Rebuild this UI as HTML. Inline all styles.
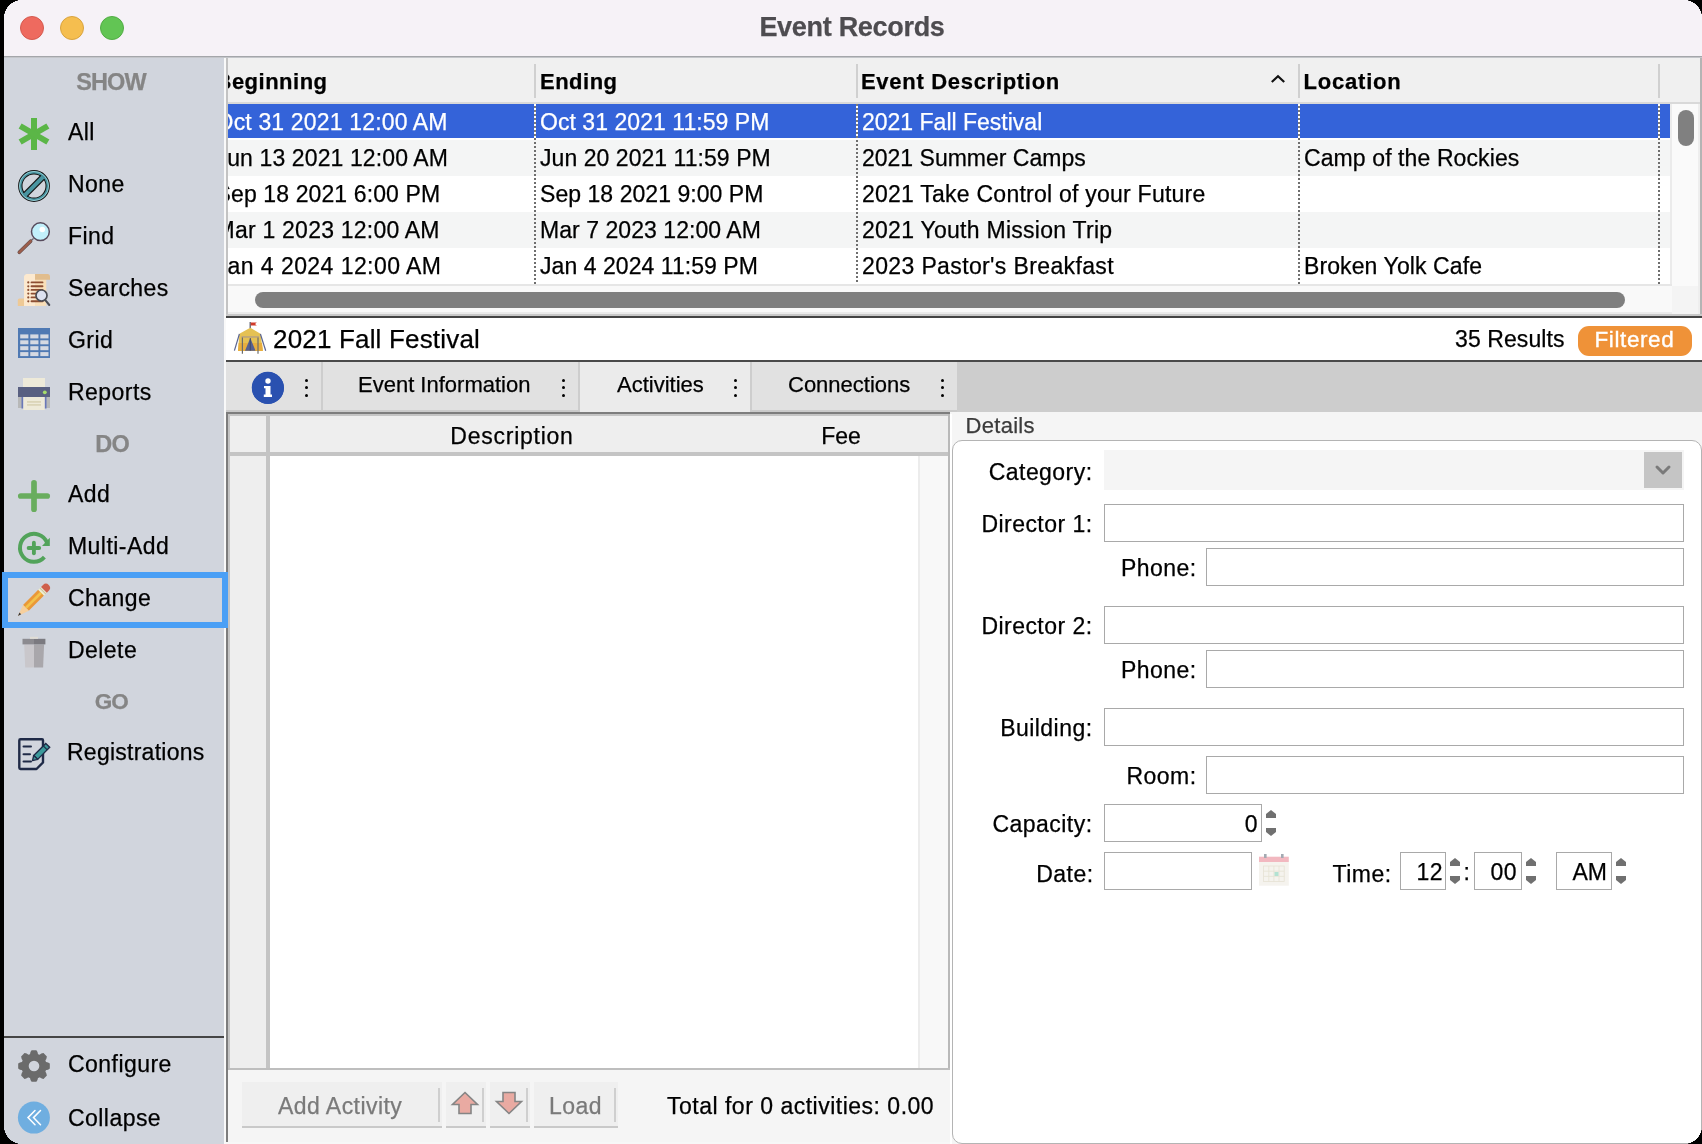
<!DOCTYPE html>
<html><head><meta charset="utf-8"><style>
html,body{margin:0;padding:0;width:1702px;height:1144px;overflow:hidden;background:#000;font-family:"Liberation Sans", sans-serif}
div{-webkit-text-stroke:0.25px}
</style></head><body>
<div style="position:absolute;left:0;top:0;width:1702px;height:1144px;will-change:transform"><div style="position:absolute;left:4px;top:0px;width:1698px;height:56px;background:#f6f2f7"></div><div style="position:absolute;left:4px;top:56px;width:1698px;height:1px;background:#a4a6aa"></div><div style="position:absolute;left:4px;top:57px;width:1698px;height:1px;background:#c4c6ca"></div><div style="position:absolute;top:14.14px;font-size:27px;line-height:27px;font-weight:bold;color:#4e4c50;white-space:nowrap;letter-spacing:-0.3px;left:552.0px;width:600px;text-align:center;">Event Records</div><div style="position:absolute;left:20px;top:16px;width:24px;height:24px;background:#ee6a5f;border-radius:50%;box-sizing:border-box;border:1px solid #d55a4f"></div><div style="position:absolute;left:60px;top:16px;width:24px;height:24px;background:#f5be4f;border-radius:50%;box-sizing:border-box;border:1px solid #d9a43f"></div><div style="position:absolute;left:100px;top:16px;width:24px;height:24px;background:#62c554;border-radius:50%;box-sizing:border-box;border:1px solid #52ad45"></div><div style="position:absolute;left:4px;top:58px;width:220px;height:1086px;background:#d1d5dd"></div><div style="position:absolute;left:224px;top:58px;width:2px;height:1086px;background:#f9f9f9"></div><div style="position:absolute;top:70.81px;font-size:23.5px;line-height:23.5px;font-weight:bold;color:#858585;white-space:nowrap;letter-spacing:-0.95px;left:11.0px;width:200px;text-align:center;">SHOW</div><div style="position:absolute;top:432.81px;font-size:23.5px;line-height:23.5px;font-weight:bold;color:#858585;white-space:nowrap;letter-spacing:-0.6px;left:12.200000000000003px;width:200px;text-align:center;">DO</div><div style="position:absolute;top:691.45px;font-size:22.5px;line-height:22.5px;font-weight:bold;color:#858585;white-space:nowrap;letter-spacing:-1.0px;left:11.200000000000003px;width:200px;text-align:center;">GO</div><div style="position:absolute;top:120.53px;font-size:23px;line-height:23px;font-weight:normal;color:#000;white-space:nowrap;letter-spacing:0.45px;left:68px;">All</div><div style="position:absolute;top:172.53px;font-size:23px;line-height:23px;font-weight:normal;color:#000;white-space:nowrap;letter-spacing:0.45px;left:68px;">None</div><div style="position:absolute;top:224.53px;font-size:23px;line-height:23px;font-weight:normal;color:#000;white-space:nowrap;letter-spacing:0.45px;left:68px;">Find</div><div style="position:absolute;top:276.53px;font-size:23px;line-height:23px;font-weight:normal;color:#000;white-space:nowrap;letter-spacing:0.45px;left:68px;">Searches</div><div style="position:absolute;top:328.53px;font-size:23px;line-height:23px;font-weight:normal;color:#000;white-space:nowrap;letter-spacing:0.45px;left:68px;">Grid</div><div style="position:absolute;top:380.53px;font-size:23px;line-height:23px;font-weight:normal;color:#000;white-space:nowrap;letter-spacing:0.45px;left:68px;">Reports</div><div style="position:absolute;top:482.53px;font-size:23px;line-height:23px;font-weight:normal;color:#000;white-space:nowrap;letter-spacing:0.45px;left:68px;">Add</div><div style="position:absolute;top:534.53px;font-size:23px;line-height:23px;font-weight:normal;color:#000;white-space:nowrap;letter-spacing:0.45px;left:68px;">Multi-Add</div><div style="position:absolute;top:586.53px;font-size:23px;line-height:23px;font-weight:normal;color:#000;white-space:nowrap;letter-spacing:0.45px;left:68px;">Change</div><div style="position:absolute;top:638.53px;font-size:23px;line-height:23px;font-weight:normal;color:#000;white-space:nowrap;letter-spacing:0.45px;left:68px;">Delete</div><div style="position:absolute;top:740.53px;font-size:23px;line-height:23px;font-weight:normal;color:#000;white-space:nowrap;letter-spacing:0.25px;left:67px;">Registrations</div><div style="position:absolute;top:1052.53px;font-size:23px;line-height:23px;font-weight:normal;color:#000;white-space:nowrap;letter-spacing:0.45px;left:68px;">Configure</div><div style="position:absolute;top:1106.53px;font-size:23px;line-height:23px;font-weight:normal;color:#000;white-space:nowrap;letter-spacing:0.45px;left:68px;">Collapse</div><div style="position:absolute;left:4px;top:1036px;width:220px;height:2px;background:#454545"></div><div style="position:absolute;left:226px;top:58px;width:2px;height:258px;background:#c3c3c3"></div><div style="position:absolute;left:228px;top:58px;width:1472px;height:44px;background:#f0f0f0"></div><div style="position:absolute;left:228px;top:102px;width:1472px;height:2px;background:#d9d9d9"></div><div style="position:absolute;left:1700px;top:58px;width:2px;height:258px;background:#b4b4b4"></div><div style="position:absolute;left:534px;top:64px;width:2px;height:34px;background:#d0d0d0"></div><div style="position:absolute;left:856px;top:64px;width:2px;height:34px;background:#d0d0d0"></div><div style="position:absolute;left:1298px;top:64px;width:2px;height:34px;background:#d0d0d0"></div><div style="position:absolute;left:1658px;top:64px;width:2px;height:34px;background:#d0d0d0"></div><div style="position:absolute;left:228px;top:58px;width:1430px;height:46px;overflow:hidden"><div style="position:absolute;top:13.38px;font-size:22px;line-height:22px;font-weight:bold;color:#000;white-space:nowrap;letter-spacing:0.5px;left:-12.5px;">Beginning</div></div><div style="position:absolute;top:71.38px;font-size:22px;line-height:22px;font-weight:bold;color:#000;white-space:nowrap;letter-spacing:0.5px;left:540px;">Ending</div><div style="position:absolute;top:71.38px;font-size:22px;line-height:22px;font-weight:bold;color:#000;white-space:nowrap;letter-spacing:0.7px;left:861px;">Event Description</div><div style="position:absolute;top:71.38px;font-size:22px;line-height:22px;font-weight:bold;color:#000;white-space:nowrap;letter-spacing:0.8px;left:1303.5px;">Location</div><div style="position:absolute;left:228px;top:104px;width:1442px;height:34px;background:#3463d9"></div><div style="position:absolute;left:228px;top:138px;width:1442px;height:2px;background:#ffffff"></div><div style="position:absolute;left:228px;top:104px;width:306px;height:36px;overflow:hidden"><div style="position:absolute;top:6.53px;font-size:23px;line-height:23px;font-weight:normal;color:#fff;white-space:nowrap;letter-spacing:0.16px;left:-12.400000000000006px;">Oct 31 2021 12:00 AM</div></div><div style="position:absolute;top:110.53px;font-size:23px;line-height:23px;font-weight:normal;color:#fff;white-space:nowrap;letter-spacing:0.05px;left:540px;">Oct 31 2021 11:59 PM</div><div style="position:absolute;top:110.53px;font-size:23px;line-height:23px;font-weight:normal;color:#fff;white-space:nowrap;letter-spacing:0.0px;left:862px;">2021 Fall Festival</div><div style="position:absolute;top:110.53px;font-size:23px;line-height:23px;font-weight:normal;color:#fff;white-space:nowrap;letter-spacing:0.1px;left:1304px;"></div><div style="position:absolute;left:228px;top:140px;width:1442px;height:36px;background:#f4f5f5"></div><div style="position:absolute;left:228px;top:140px;width:306px;height:36px;overflow:hidden"><div style="position:absolute;top:6.53px;font-size:23px;line-height:23px;font-weight:normal;color:#000;white-space:nowrap;letter-spacing:0.11px;left:-12.400000000000006px;">Jun 13 2021 12:00 AM</div></div><div style="position:absolute;top:146.53px;font-size:23px;line-height:23px;font-weight:normal;color:#000;white-space:nowrap;letter-spacing:0.05px;left:540px;">Jun 20 2021 11:59 PM</div><div style="position:absolute;top:146.53px;font-size:23px;line-height:23px;font-weight:normal;color:#000;white-space:nowrap;letter-spacing:0.0px;left:862px;">2021 Summer Camps</div><div style="position:absolute;top:146.53px;font-size:23px;line-height:23px;font-weight:normal;color:#000;white-space:nowrap;letter-spacing:0.1px;left:1304px;">Camp of the Rockies</div><div style="position:absolute;left:228px;top:176px;width:1442px;height:36px;background:#ffffff"></div><div style="position:absolute;left:228px;top:176px;width:306px;height:36px;overflow:hidden"><div style="position:absolute;top:6.53px;font-size:23px;line-height:23px;font-weight:normal;color:#000;white-space:nowrap;letter-spacing:0.11px;left:-12.400000000000006px;">Sep 18 2021 6:00 PM</div></div><div style="position:absolute;top:182.53px;font-size:23px;line-height:23px;font-weight:normal;color:#000;white-space:nowrap;letter-spacing:0.05px;left:540px;">Sep 18 2021 9:00 PM</div><div style="position:absolute;top:182.53px;font-size:23px;line-height:23px;font-weight:normal;color:#000;white-space:nowrap;letter-spacing:0.24px;left:862px;">2021 Take Control of your Future</div><div style="position:absolute;top:182.53px;font-size:23px;line-height:23px;font-weight:normal;color:#000;white-space:nowrap;letter-spacing:0.1px;left:1304px;"></div><div style="position:absolute;left:228px;top:212px;width:1442px;height:36px;background:#f4f5f5"></div><div style="position:absolute;left:228px;top:212px;width:306px;height:36px;overflow:hidden"><div style="position:absolute;top:6.53px;font-size:23px;line-height:23px;font-weight:normal;color:#000;white-space:nowrap;letter-spacing:0.22px;left:-12.400000000000006px;">Mar 1 2023 12:00 AM</div></div><div style="position:absolute;top:218.53px;font-size:23px;line-height:23px;font-weight:normal;color:#000;white-space:nowrap;letter-spacing:0.05px;left:540px;">Mar 7 2023 12:00 AM</div><div style="position:absolute;top:218.53px;font-size:23px;line-height:23px;font-weight:normal;color:#000;white-space:nowrap;letter-spacing:0.27px;left:862px;">2021 Youth Mission Trip</div><div style="position:absolute;top:218.53px;font-size:23px;line-height:23px;font-weight:normal;color:#000;white-space:nowrap;letter-spacing:0.1px;left:1304px;"></div><div style="position:absolute;left:228px;top:248px;width:1442px;height:36px;background:#ffffff"></div><div style="position:absolute;left:228px;top:248px;width:306px;height:36px;overflow:hidden"><div style="position:absolute;top:6.53px;font-size:23px;line-height:23px;font-weight:normal;color:#000;white-space:nowrap;letter-spacing:0.44px;left:-12.400000000000006px;">Jan 4 2024 12:00 AM</div></div><div style="position:absolute;top:254.53px;font-size:23px;line-height:23px;font-weight:normal;color:#000;white-space:nowrap;letter-spacing:0.05px;left:540px;">Jan 4 2024 11:59 PM</div><div style="position:absolute;top:254.53px;font-size:23px;line-height:23px;font-weight:normal;color:#000;white-space:nowrap;letter-spacing:0.37px;left:862px;">2023 Pastor's Breakfast</div><div style="position:absolute;top:254.53px;font-size:23px;line-height:23px;font-weight:normal;color:#000;white-space:nowrap;letter-spacing:0.1px;left:1304px;">Broken Yolk Cafe</div><div style="position:absolute;left:534px;top:104px;width:2px;height:34px;background:repeating-linear-gradient(to bottom,#ffffff 0 2px,#7a7a7a 2px 4px)"></div><div style="position:absolute;left:534px;top:138px;width:2px;height:146px;background:repeating-linear-gradient(to bottom,#6e6e6e 0 2px,transparent 2px 4px)"></div><div style="position:absolute;left:856px;top:104px;width:2px;height:34px;background:repeating-linear-gradient(to bottom,#7a7a7a 0 2px,#ffffff 2px 4px)"></div><div style="position:absolute;left:856px;top:138px;width:2px;height:146px;background:repeating-linear-gradient(to bottom,transparent 0 2px,#6e6e6e 2px 4px)"></div><div style="position:absolute;left:1298px;top:104px;width:2px;height:34px;background:repeating-linear-gradient(to bottom,#ffffff 0 2px,#7a7a7a 2px 4px)"></div><div style="position:absolute;left:1298px;top:138px;width:2px;height:146px;background:repeating-linear-gradient(to bottom,#6e6e6e 0 2px,transparent 2px 4px)"></div><div style="position:absolute;left:1658px;top:104px;width:2px;height:34px;background:repeating-linear-gradient(to bottom,#ffffff 0 2px,#7a7a7a 2px 4px)"></div><div style="position:absolute;left:1658px;top:138px;width:2px;height:146px;background:repeating-linear-gradient(to bottom,#6e6e6e 0 2px,transparent 2px 4px)"></div><div style="position:absolute;left:1670px;top:104px;width:2px;height:182px;background:#ebebeb"></div><div style="position:absolute;left:1672px;top:104px;width:26px;height:182px;background:#fafafa"></div><div style="position:absolute;left:1678px;top:110px;width:16px;height:36px;background:#808080;border-radius:8px"></div><div style="position:absolute;left:228px;top:284px;width:1444px;height:2px;background:#e6e6e6"></div><div style="position:absolute;left:228px;top:286px;width:1444px;height:26px;background:#f9f9f9"></div><div style="position:absolute;left:228px;top:312px;width:1444px;height:2px;background:#ebebeb"></div><div style="position:absolute;left:1672px;top:286px;width:26px;height:28px;background:#f4f4f4"></div><div style="position:absolute;left:255px;top:292px;width:1370px;height:16px;background:#7f7f7f;border-radius:8px"></div><div style="position:absolute;left:1698px;top:104px;width:2px;height:210px;background:#eeeeee"></div><div style="position:absolute;left:226px;top:314px;width:1476px;height:2px;background:#c9c9c9"></div><div style="position:absolute;left:226px;top:316px;width:1476px;height:2px;background:#444"></div><div style="position:absolute;left:226px;top:318px;width:1476px;height:42px;background:#fff"></div><div style="position:absolute;top:325.79px;font-size:26px;line-height:26px;font-weight:normal;color:#000;white-space:nowrap;letter-spacing:0.18px;left:273px;">2021 Fall Festival</div><div style="position:absolute;top:328.33px;font-size:23px;line-height:23px;font-weight:normal;color:#000;white-space:nowrap;letter-spacing:0.1px;left:1455px;">35 Results</div><div style="position:absolute;left:1578px;top:326px;width:114px;height:30px;background:#ef9238;border-radius:11px"></div><div style="position:absolute;top:328.95px;font-size:22.5px;line-height:22.5px;font-weight:normal;color:#fff;white-space:nowrap;letter-spacing:0.6px;left:1594.5px;-webkit-text-stroke:0.35px #fff">Filtered</div><div style="position:absolute;left:226px;top:360px;width:1476px;height:2px;background:#4a4a4a"></div><div style="position:absolute;left:226px;top:362px;width:1476px;height:50px;background:#e1e1e1"></div><div style="position:absolute;left:226px;top:410px;width:731px;height:2px;background:#cacaca"></div><div style="position:absolute;left:957px;top:362px;width:745px;height:50px;background:#cdcdcd"></div><div style="position:absolute;left:580px;top:362px;width:170px;height:50px;background:#ebebeb"></div><div style="position:absolute;left:321px;top:362px;width:2px;height:48px;background:#cdcdcd"></div><div style="position:absolute;left:578px;top:362px;width:2px;height:48px;background:#cdcdcd"></div><div style="position:absolute;left:750px;top:362px;width:2px;height:48px;background:#cdcdcd"></div><div style="position:absolute;left:252px;top:372px;width:32px;height:32px;background:#2b52b0;border-radius:50%"></div><div style="position:absolute;left:304.5px;top:378.5px;width:3px;height:3px;background:#000;border-radius:50%"></div><div style="position:absolute;left:304.5px;top:386.0px;width:3px;height:3px;background:#000;border-radius:50%"></div><div style="position:absolute;left:304.5px;top:393.5px;width:3px;height:3px;background:#000;border-radius:50%"></div><div style="position:absolute;left:561.5px;top:378.5px;width:3px;height:3px;background:#000;border-radius:50%"></div><div style="position:absolute;left:561.5px;top:386.0px;width:3px;height:3px;background:#000;border-radius:50%"></div><div style="position:absolute;left:561.5px;top:393.5px;width:3px;height:3px;background:#000;border-radius:50%"></div><div style="position:absolute;left:733.5px;top:378.5px;width:3px;height:3px;background:#000;border-radius:50%"></div><div style="position:absolute;left:733.5px;top:386.0px;width:3px;height:3px;background:#000;border-radius:50%"></div><div style="position:absolute;left:733.5px;top:393.5px;width:3px;height:3px;background:#000;border-radius:50%"></div><div style="position:absolute;left:940.5px;top:378.5px;width:3px;height:3px;background:#000;border-radius:50%"></div><div style="position:absolute;left:940.5px;top:386.0px;width:3px;height:3px;background:#000;border-radius:50%"></div><div style="position:absolute;left:940.5px;top:393.5px;width:3px;height:3px;background:#000;border-radius:50%"></div><div style="position:absolute;top:373.88px;font-size:22px;line-height:22px;font-weight:normal;color:#000;white-space:nowrap;left:358px;">Event Information</div><div style="position:absolute;top:373.88px;font-size:22px;line-height:22px;font-weight:normal;color:#000;white-space:nowrap;left:617px;">Activities</div><div style="position:absolute;top:373.88px;font-size:22px;line-height:22px;font-weight:normal;color:#000;white-space:nowrap;left:788px;">Connections</div><div style="position:absolute;left:226px;top:412px;width:724px;height:2px;background:#7d7d7d"></div><div style="position:absolute;left:226px;top:412px;width:2px;height:732px;background:#7d7d7d"></div><div style="position:absolute;left:228px;top:414px;width:722px;height:656px;background:#c4c4c4"></div><div style="position:absolute;left:230px;top:416px;width:36px;height:36px;background:#eeeeee"></div><div style="position:absolute;left:270px;top:416px;width:678px;height:36px;background:#eeeeee"></div><div style="position:absolute;left:230px;top:456px;width:36px;height:612px;background:#eeeeee"></div><div style="position:absolute;left:270px;top:456px;width:648px;height:612px;background:#ffffff"></div><div style="position:absolute;left:918px;top:456px;width:30px;height:612px;background:#f8f8f8"></div><div style="position:absolute;left:918px;top:456px;width:2px;height:612px;background:#ececec"></div><div style="position:absolute;left:948px;top:414px;width:2px;height:656px;background:#b9b9b9"></div><div style="position:absolute;left:228px;top:1068px;width:722px;height:2px;background:#bebebe"></div><div style="position:absolute;top:424.53px;font-size:23px;line-height:23px;font-weight:normal;color:#000;white-space:nowrap;letter-spacing:0.75px;left:362.0px;width:300px;text-align:center;">Description</div><div style="position:absolute;top:424.53px;font-size:23px;line-height:23px;font-weight:normal;color:#000;white-space:nowrap;letter-spacing:0px;left:791.0px;width:100px;text-align:center;">Fee</div><div style="position:absolute;left:228px;top:1070px;width:722px;height:74px;background:#f5f5f5"></div><div style="position:absolute;left:242px;top:1082px;width:200px;height:44px;background:#efefef"></div><div style="position:absolute;left:242px;top:1126px;width:200px;height:2px;background:#c9c9c9"></div><div style="position:absolute;left:438px;top:1088px;width:2px;height:34px;background:#cfcfcf"></div><div style="position:absolute;left:446px;top:1082px;width:40px;height:44px;background:#efefef"></div><div style="position:absolute;left:446px;top:1126px;width:40px;height:2px;background:#c9c9c9"></div><div style="position:absolute;left:482px;top:1088px;width:2px;height:34px;background:#cfcfcf"></div><div style="position:absolute;left:490px;top:1082px;width:40px;height:44px;background:#efefef"></div><div style="position:absolute;left:490px;top:1126px;width:40px;height:2px;background:#c9c9c9"></div><div style="position:absolute;left:526px;top:1088px;width:2px;height:34px;background:#cfcfcf"></div><div style="position:absolute;left:534px;top:1082px;width:84px;height:44px;background:#efefef"></div><div style="position:absolute;left:534px;top:1126px;width:84px;height:2px;background:#c9c9c9"></div><div style="position:absolute;left:614px;top:1088px;width:2px;height:34px;background:#cfcfcf"></div><div style="position:absolute;left:226px;top:1142px;width:724px;height:2px;background:#f7f7f7"></div><div style="position:absolute;top:1095.03px;font-size:23px;line-height:23px;font-weight:normal;color:#7a7a7a;white-space:nowrap;letter-spacing:0.45px;left:278px;">Add Activity</div><div style="position:absolute;top:1095.03px;font-size:23px;line-height:23px;font-weight:normal;color:#7a7a7a;white-space:nowrap;letter-spacing:0.45px;left:549px;">Load</div><div style="position:absolute;top:1095.03px;font-size:23px;line-height:23px;font-weight:normal;color:#000;white-space:nowrap;letter-spacing:0.5px;left:667px;">Total for 0 activities: 0.00</div><div style="position:absolute;left:950px;top:412px;width:752px;height:732px;background:#f5f5f5"></div><div style="position:absolute;left:950px;top:414px;width:2px;height:730px;background:#ffffff"></div><div style="position:absolute;top:415.38px;font-size:22px;line-height:22px;font-weight:normal;color:#3b3b3b;white-space:nowrap;letter-spacing:0.3px;left:965.5px;">Details</div><div style="position:absolute;left:952px;top:440px;width:750px;height:704px;background:#fff;border:1px solid #b4b4b4;border-radius:10px;box-sizing:border-box"></div><div style="position:absolute;left:1104px;top:450px;width:580px;height:40px;background:#f5f5f5"></div><div style="position:absolute;left:1644px;top:452px;width:38px;height:36px;background:#c5c5c5"></div><div style="position:absolute;left:1104px;top:504px;width:580px;height:38px;background:#fff;border:1px solid #a9a9a9;box-sizing:border-box"></div><div style="position:absolute;left:1206px;top:548px;width:478px;height:38px;background:#fff;border:1px solid #a9a9a9;box-sizing:border-box"></div><div style="position:absolute;left:1104px;top:606px;width:580px;height:38px;background:#fff;border:1px solid #a9a9a9;box-sizing:border-box"></div><div style="position:absolute;left:1206px;top:650px;width:478px;height:38px;background:#fff;border:1px solid #a9a9a9;box-sizing:border-box"></div><div style="position:absolute;left:1104px;top:708px;width:580px;height:38px;background:#fff;border:1px solid #a9a9a9;box-sizing:border-box"></div><div style="position:absolute;left:1206px;top:756px;width:478px;height:38px;background:#fff;border:1px solid #a9a9a9;box-sizing:border-box"></div><div style="position:absolute;left:1104px;top:804px;width:158px;height:38px;background:#fff;border:1px solid #a9a9a9;box-sizing:border-box"></div><div style="position:absolute;left:1104px;top:852px;width:148px;height:38px;background:#fff;border:1px solid #a9a9a9;box-sizing:border-box"></div><div style="position:absolute;left:1400px;top:852px;width:46px;height:38px;background:#fff;border:1px solid #a9a9a9;box-sizing:border-box"></div><div style="position:absolute;left:1474px;top:852px;width:48px;height:38px;background:#fff;border:1px solid #a9a9a9;box-sizing:border-box"></div><div style="position:absolute;left:1556px;top:852px;width:56px;height:38px;background:#fff;border:1px solid #a9a9a9;box-sizing:border-box"></div><div style="position:absolute;top:460.53px;font-size:23px;line-height:23px;font-weight:normal;color:#000;white-space:nowrap;letter-spacing:0.45px;right:609.5px;text-align:right;">Category:</div><div style="position:absolute;top:512.53px;font-size:23px;line-height:23px;font-weight:normal;color:#000;white-space:nowrap;letter-spacing:0.45px;right:609.5px;text-align:right;">Director 1:</div><div style="position:absolute;top:556.53px;font-size:23px;line-height:23px;font-weight:normal;color:#000;white-space:nowrap;letter-spacing:0.45px;right:505.5px;text-align:right;">Phone:</div><div style="position:absolute;top:614.53px;font-size:23px;line-height:23px;font-weight:normal;color:#000;white-space:nowrap;letter-spacing:0.45px;right:609.5px;text-align:right;">Director 2:</div><div style="position:absolute;top:658.53px;font-size:23px;line-height:23px;font-weight:normal;color:#000;white-space:nowrap;letter-spacing:0.45px;right:505.5px;text-align:right;">Phone:</div><div style="position:absolute;top:716.53px;font-size:23px;line-height:23px;font-weight:normal;color:#000;white-space:nowrap;letter-spacing:0.45px;right:609.5px;text-align:right;">Building:</div><div style="position:absolute;top:764.53px;font-size:23px;line-height:23px;font-weight:normal;color:#000;white-space:nowrap;letter-spacing:0.45px;right:505.5px;text-align:right;">Room:</div><div style="position:absolute;top:812.53px;font-size:23px;line-height:23px;font-weight:normal;color:#000;white-space:nowrap;letter-spacing:0.45px;right:609.5px;text-align:right;">Capacity:</div><div style="position:absolute;top:862.53px;font-size:23px;line-height:23px;font-weight:normal;color:#000;white-space:nowrap;letter-spacing:0.45px;right:608.5px;text-align:right;">Date:</div><div style="position:absolute;top:862.53px;font-size:23px;line-height:23px;font-weight:normal;color:#000;white-space:nowrap;letter-spacing:0.45px;right:310.5px;text-align:right;">Time:</div><div style="position:absolute;top:812.53px;font-size:23px;line-height:23px;font-weight:normal;color:#000;white-space:nowrap;letter-spacing:0.45px;right:444px;text-align:right;">0</div><div style="position:absolute;top:860.53px;font-size:23px;line-height:23px;font-weight:normal;color:#000;white-space:nowrap;letter-spacing:0.45px;right:259px;text-align:right;">12</div><div style="position:absolute;top:860.53px;font-size:23px;line-height:23px;font-weight:normal;color:#000;white-space:nowrap;letter-spacing:0.45px;right:185px;text-align:right;">00</div><div style="position:absolute;top:860.53px;font-size:23px;line-height:23px;font-weight:normal;color:#000;white-space:nowrap;letter-spacing:0px;right:95px;text-align:right;">AM</div><div style="position:absolute;top:860.53px;font-size:23px;line-height:23px;font-weight:normal;color:#000;white-space:nowrap;letter-spacing:0.45px;left:1462.0px;width:10px;text-align:center;">:</div><svg style="position:absolute;left:14px;top:114px;overflow:visible" width="40" height="40" viewBox="14 114 40 40"><g fill="#5bb647" transform="translate(34 134)"><rect x="-3" y="-16" width="6" height="32"/><rect x="-3" y="-16" width="6" height="32" transform="rotate(60)"/><rect x="-3" y="-16" width="6" height="32" transform="rotate(-60)"/></g></svg><svg style="position:absolute;left:14px;top:166px;overflow:visible" width="40" height="40" viewBox="14 166 40 40"><g transform="translate(34 186)"><circle r="13.7" fill="none" stroke="#141414" stroke-width="4.4"/><circle r="13.7" fill="none" stroke="#4a95a1" stroke-width="2.4"/><circle r="14.6" fill="none" stroke="#bfeff3" stroke-width="0.6"/><g transform="rotate(-45)"><rect x="-12.3" y="-3.1" width="24.6" height="6.2" fill="#141414"/><rect x="-12.8" y="-2" width="25.6" height="4" fill="#4a95a1"/></g></g></svg><svg style="position:absolute;left:14px;top:218px;overflow:visible" width="40" height="40" viewBox="14 218 40 40"><line x1="30" y1="241.5" x2="33.5" y2="238.5" stroke="#6a6a70" stroke-width="1.3"/><line x1="19.3" y1="252.3" x2="30.6" y2="241.2" stroke="#5e4a48" stroke-width="3.6" stroke-linecap="round"/><line x1="19.3" y1="252.3" x2="30.6" y2="241.2" stroke="#9d5e4c" stroke-width="2.5" stroke-linecap="round"/><circle cx="40.4" cy="231.7" r="8.9" fill="#c2f0fb" stroke="#574b5c" stroke-width="1.5"/><circle cx="42.3" cy="229.5" r="2.8" fill="#fff"/></svg><svg style="position:absolute;left:14px;top:268px;overflow:visible" width="40" height="44" viewBox="14 268 40 44"><path d="M17.8 305.9 L17.8 300 Q17.8 298.4 19.5 298.4 L24 298.4 L24 305.9 Z" fill="#eec995"/><path d="M24 305.9 L24 278 Q24 274 28 274 L35 274 L35 305.9 Z" fill="#fce9cf"/><rect x="35" y="279" width="11.3" height="26.9" fill="#f9dfb8"/><path d="M31 274 L47.5 274 Q50 274 50 277 L50 279.7 L35 279.7 L35 274 Z" fill="#e1bd8d"/><path d="M28 274 Q32 274 32 278 L32 305.9 L24 305.9 L24 278 Q24 274 28 274Z" fill="#fce9cf"/><circle cx="28.3" cy="282.4" r="1.1" fill="#8c4e32"/><line x1="31.5" y1="282.4" x2="42.5" y2="282.4" stroke="#8c4e32" stroke-width="1.9" stroke-linecap="round"/><circle cx="28.3" cy="286.3" r="1.1" fill="#8c4e32"/><line x1="31.5" y1="286.3" x2="42.5" y2="286.3" stroke="#8c4e32" stroke-width="1.9" stroke-linecap="round"/><circle cx="28.3" cy="289.9" r="1.1" fill="#8c4e32"/><line x1="31.5" y1="289.9" x2="42.5" y2="289.9" stroke="#8c4e32" stroke-width="1.9" stroke-linecap="round"/><circle cx="28.3" cy="293.6" r="1.1" fill="#8c4e32"/><line x1="31.5" y1="293.6" x2="42.5" y2="293.6" stroke="#8c4e32" stroke-width="1.9" stroke-linecap="round"/><circle cx="28.3" cy="297.4" r="1.1" fill="#8c4e32"/><line x1="31.5" y1="297.4" x2="42.5" y2="297.4" stroke="#8c4e32" stroke-width="1.9" stroke-linecap="round"/><circle cx="28.3" cy="301.3" r="1.1" fill="#8c4e32"/><line x1="31.5" y1="301.3" x2="42.5" y2="301.3" stroke="#8c4e32" stroke-width="1.9" stroke-linecap="round"/><line x1="45.5" y1="300.3" x2="49.3" y2="305" stroke="#4a4d55" stroke-width="2" stroke-linecap="round"/><circle cx="41.5" cy="295.5" r="5.5" fill="#dde2f0" stroke="#4a4d55" stroke-width="1.7"/></svg><svg style="position:absolute;left:14px;top:324px;overflow:visible" width="40" height="40" viewBox="14 324 40 40"><rect x="18" y="328" width="32" height="30" fill="#4f79b3"/><rect x="20.2" y="334.4" width="8.2" height="4" fill="#d5d9e2"/><rect x="30.25" y="334.4" width="8.2" height="4" fill="#d5d9e2"/><rect x="40.3" y="334.4" width="8.2" height="4" fill="#d5d9e2"/><rect x="20.2" y="340.29999999999995" width="8.2" height="4" fill="#d5d9e2"/><rect x="30.25" y="340.29999999999995" width="8.2" height="4" fill="#d5d9e2"/><rect x="40.3" y="340.29999999999995" width="8.2" height="4" fill="#d5d9e2"/><rect x="20.2" y="346.2" width="8.2" height="4" fill="#d5d9e2"/><rect x="30.25" y="346.2" width="8.2" height="4" fill="#d5d9e2"/><rect x="40.3" y="346.2" width="8.2" height="4" fill="#d5d9e2"/><rect x="20.2" y="352.09999999999997" width="8.2" height="4" fill="#d5d9e2"/><rect x="30.25" y="352.09999999999997" width="8.2" height="4" fill="#d5d9e2"/><rect x="40.3" y="352.09999999999997" width="8.2" height="4" fill="#d5d9e2"/></svg><svg style="position:absolute;left:14px;top:374px;overflow:visible" width="40" height="40" viewBox="14 374 40 40"><rect x="23" y="378" width="22" height="10" fill="#eeead9"/><rect x="18" y="387" width="32" height="10" fill="#596081"/><circle cx="44.8" cy="392.3" r="1.9" fill="#a6dc6a"/><rect x="18" y="397" width="4" height="11" fill="#b7b8b8"/><rect x="46" y="397" width="4" height="11" fill="#b7b8b8"/><rect x="21.5" y="397" width="2" height="11.5" fill="#6a78b8"/><rect x="44.5" y="397" width="2" height="11.5" fill="#6a78b8"/><rect x="23.3" y="397" width="21.4" height="13" fill="#eeead9"/><rect x="27" y="401.5" width="14" height="0.9" fill="#c8bf98"/><rect x="27" y="404.5" width="14" height="0.9" fill="#c8bf98"/></svg><svg style="position:absolute;left:14px;top:476px;overflow:visible" width="40" height="40" viewBox="14 476 40 40"><g stroke="#69ad5e" stroke-width="5.7" stroke-linecap="round"><line x1="20.8" y1="496" x2="47.2" y2="496"/><line x1="34" y1="482.8" x2="34" y2="509.2"/></g></svg><svg style="position:absolute;left:14px;top:528px;overflow:visible" width="40" height="40" viewBox="14 528 40 40"><path d="M44.40 557.17 A14.0 14.0 0 1 1 46.98 542.56" fill="none" stroke="#52a35a" stroke-width="3.9"/><path d="M49.8 537.8 L49.8 545.9 L42.0 545.9 Z" fill="#52a35a"/><g stroke="#52a35a" stroke-width="3.85" stroke-linecap="round"><line x1="28.6" y1="548" x2="39.2" y2="548"/><line x1="33.9" y1="542.7" x2="33.9" y2="553.3"/></g></svg><svg style="position:absolute;left:14px;top:580px;overflow:visible" width="40" height="40" viewBox="14 580 40 40"><g transform="translate(33.9 599.9) rotate(45) scale(1.13)"><rect x="-3.6" y="-9" width="7.2" height="19" fill="#ea9838"/><rect x="-1.2" y="-9" width="2.4" height="19" fill="#f3c24a"/><rect x="-3.6" y="-12.6" width="7.2" height="3.6" fill="#efedd0"/><rect x="-3.6" y="-11.6" width="7.2" height="0.8" fill="#c9c3a0"/><path d="M-3.6 -12.6 L-3.6 -15 A3.6 3.6 0 0 1 3.6 -15 L3.6 -12.6 Z" fill="#cf604c"/><path d="M-3.6 10 L0 20 L3.6 10 Z" fill="#f6cf9c"/><path d="M-1.1 17 L0 20 L1.1 17 Z" fill="#3a3a3a"/></g></svg><svg style="position:absolute;left:14px;top:632px;overflow:visible" width="40" height="40" viewBox="14 632 40 40"><path d="M24.2 644.4 L34 644.4 L34 667.6 L25.2 667.6 Z" fill="#c9c7cb"/><path d="M34 644.4 L44.1 644.4 L43.1 667.6 L34 667.6 Z" fill="#a9a7ab"/><rect x="22.5" y="638.8" width="11.5" height="5.6" fill="#8c8b90"/><rect x="34" y="638.8" width="11.4" height="5.6" fill="#7b7a80"/><rect x="30" y="636.8" width="8" height="2" fill="#e0ddd5"/></svg><svg style="position:absolute;left:14px;top:734px;overflow:visible" width="40" height="40" viewBox="14 734 40 40"><path d="M20.5 739.2 L42 739.2 Q43 739.2 43 740.2 L43 762.5 L36.5 769 L20.5 769 Q19.3 769 19.3 767.8 L19.3 740.4 Q19.3 739.2 20.5 739.2 Z" fill="none" stroke="#1f2a47" stroke-width="2.4" stroke-linejoin="round"/><g stroke="#1f2a47" stroke-width="2" stroke-linecap="round"><line x1="23.5" y1="746.4" x2="31" y2="746.4"/><line x1="23.5" y1="754.3" x2="30" y2="754.3"/><line x1="23.5" y1="761.5" x2="31" y2="761.5"/></g><g transform="translate(40.3 752.8) rotate(45)"><rect x="-2.8" y="-10.5" width="5.6" height="17" fill="#3c9a9b" stroke="#1f2a47" stroke-width="1.4"/><path d="M-2.8 6.5 L0 11 L2.8 6.5 Z" fill="#3c9a9b" stroke="#1f2a47" stroke-width="1.4" stroke-linejoin="round"/><line x1="-2.8" y1="-7" x2="2.8" y2="-7" stroke="#1f2a47" stroke-width="1.2"/></g></svg><svg style="position:absolute;left:14px;top:1046px;overflow:visible" width="40" height="40" viewBox="14 1046 40 40"><circle cx="34.0" cy="1066.0" r="12.6" fill="#6b6b6b"/><path d="M29.84 1054.96 Q30.24 1051.27 31.61 1050.18 L36.39 1050.18 Q37.76 1051.27 38.16 1054.96 L38.87 1055.25 Q41.75 1052.93 43.50 1053.12 L46.88 1056.50 Q47.07 1058.25 44.75 1061.13 L45.04 1061.84 Q48.73 1062.24 49.82 1063.61 L49.82 1068.39 Q48.73 1069.76 45.04 1070.16 L44.75 1070.87 Q47.07 1073.75 46.88 1075.50 L43.50 1078.88 Q41.75 1079.07 38.87 1076.75 L38.16 1077.04 Q37.76 1080.73 36.39 1081.82 L31.61 1081.82 Q30.24 1080.73 29.84 1077.04 L29.13 1076.75 Q26.25 1079.07 24.50 1078.88 L21.12 1075.50 Q20.93 1073.75 23.25 1070.87 L22.96 1070.16 Q19.27 1069.76 18.18 1068.39 L18.18 1063.61 Q19.27 1062.24 22.96 1061.84 L23.25 1061.13 Q20.93 1058.25 21.12 1056.50 L24.50 1053.12 Q26.25 1052.93 29.13 1055.25 Z" fill="#6b6b6b"/><circle cx="34.0" cy="1066.0" r="5.3" fill="#d1d5dd"/></svg><svg style="position:absolute;left:14px;top:1098px;overflow:visible" width="40" height="40" viewBox="14 1098 40 40"><circle cx="33.9" cy="1117.6" r="16" fill="#6faee0"/><g fill="none" stroke="#fff" stroke-width="1.5" stroke-linecap="round"><polyline points="35,1110.5 28,1117.6 35,1124.7"/><polyline points="40.5,1110.5 33.5,1117.6 40.5,1124.7"/></g></svg><svg style="position:absolute;left:230px;top:318px;overflow:visible" width="40" height="40" viewBox="230 318 40 40"><line x1="250.2" y1="322" x2="250.2" y2="328.5" stroke="#4a5060" stroke-width="1.2"/><path d="M250.7 322.4 L256.8 322.4 L255 324 L256.8 325.6 L250.7 325.6 Z" fill="#d13a2a"/><path d="M250.3 327.8 L260.5 333.7 L262.9 351 L238 351 L239.4 333.7 Z" fill="#e5c153"/><path d="M238.7 343 L262 343 L262.9 351 L238 351 Z" fill="#e8ae3e"/><rect x="241.5" y="336.2" width="17.5" height="1.5" fill="#b9a27e"/><path d="M250.3 337.9 L255.5 350.7 L245 350.7 Z" fill="#566091"/><line x1="250.3" y1="338" x2="250.3" y2="350.7" stroke="#3c4460" stroke-width="0.8"/><g stroke="#6b6b6b" stroke-width="1.2"><line x1="242.4" y1="337.6" x2="242.4" y2="353.7"/><line x1="258" y1="337.6" x2="258" y2="353.7"/></g><g stroke="#5a6590" stroke-width="1.2"><line x1="239.4" y1="334" x2="234.4" y2="350.7"/><line x1="260.4" y1="334" x2="265.7" y2="350.7"/></g></svg><svg style="position:absolute;left:248px;top:368px;overflow:visible" width="40" height="40" viewBox="248 368 40 40"><circle cx="267.8" cy="387.8" r="16" fill="#2a51b0"/><circle cx="268" cy="381" r="2.7" fill="#fff"/><path d="M264 386 L270.5 386 L270.5 394.5 L272 394.5 L272 397 L263.8 397 L263.8 394.5 L265.5 394.5 L265.5 388.3 L264 388.3 Z" fill="#fff"/></svg><svg style="position:absolute;left:1266px;top:68px;overflow:visible" width="24" height="20" viewBox="1266 68 24 20"><polyline points="1272.6,81.3 1278,76.3 1283.4,81.3" fill="none" stroke="#111" stroke-width="2.2" stroke-linecap="square" stroke-linejoin="miter"/></svg><svg style="position:absolute;left:1644px;top:452px;overflow:visible" width="38" height="36" viewBox="1644 452 38 36"><polyline points="1657,467 1663,473 1669,467" fill="none" stroke="#7a7a7a" stroke-width="3" stroke-linecap="round" stroke-linejoin="round"/></svg><svg style="position:absolute;left:1260px;top:800px;overflow:visible" width="40" height="40" viewBox="1260 800 40 40"><path d="M1271.0 810 L1276 814 L1276 818 L1266 818 L1266 814 Z" fill="#707070"/><path d="M1266 828 L1276 828 L1276 832 L1271.0 836 L1266 832 Z" fill="#707070"/></svg><svg style="position:absolute;left:1440px;top:850px;overflow:visible" width="200" height="40" viewBox="1440 850 200 40"><path d="M1455.0 858 L1460 862 L1460 866 L1450 866 L1450 862 Z" fill="#707070"/><path d="M1450 876 L1460 876 L1460 880 L1455.0 884 L1450 880 Z" fill="#707070"/><path d="M1531.0 858 L1536 862 L1536 866 L1526 866 L1526 862 Z" fill="#707070"/><path d="M1526 876 L1536 876 L1536 880 L1531.0 884 L1526 880 Z" fill="#707070"/><path d="M1621.0 858 L1626 862 L1626 866 L1616 866 L1616 862 Z" fill="#707070"/><path d="M1616 876 L1626 876 L1626 880 L1621.0 884 L1616 880 Z" fill="#707070"/></svg><svg style="position:absolute;left:1255px;top:850px;overflow:visible" width="40" height="40" viewBox="1255 850 40 40"><rect x="1259" y="862" width="29.8" height="23.7" fill="#f5f3ee"/><rect x="1259" y="856.7" width="29.8" height="5.3" fill="#f2b8c0"/><rect x="1264" y="854" width="2.6" height="4" fill="#a3aab2"/><rect x="1281" y="854" width="2.6" height="4" fill="#a3aab2"/><g stroke="#e6e2d4" stroke-width="0.8" fill="none"><rect x="1263.6" y="866" width="20.6" height="15.6"/><line x1="1268.8" y1="866" x2="1268.8" y2="881.6"/><line x1="1273.9" y1="866" x2="1273.9" y2="881.6"/><line x1="1279" y1="866" x2="1279" y2="881.6"/><line x1="1263.6" y1="871.2" x2="1284.2" y2="871.2"/><line x1="1263.6" y1="876.4" x2="1284.2" y2="876.4"/></g><rect x="1274.5" y="872" width="4" height="4" fill="#b3e2d2"/></svg><svg style="position:absolute;left:446px;top:1082px;overflow:visible" width="90" height="44" viewBox="446 1082 90 44"><path d="M465 1092.5 L477.5 1104.5 L471 1104.5 L471 1113.5 L459 1113.5 L459 1104.5 L452.5 1104.5 Z" fill="#e9aaa2" stroke="#858585" stroke-width="1.6" stroke-linejoin="miter"/><path d="M509 1113.5 L521.5 1101.5 L515 1101.5 L515 1092.5 L503 1092.5 L503 1101.5 L496.5 1101.5 Z" fill="#e9aaa2" stroke="#858585" stroke-width="1.6" stroke-linejoin="miter"/></svg><div style="position:absolute;left:0px;top:0px;width:4px;height:1144px;background:#000"></div><div style="position:absolute;left:4px;top:0px;width:18px;height:18px;background:radial-gradient(circle at 100% 100%, transparent 17.85px, #000 18.15px)"></div><div style="position:absolute;left:1684px;top:0px;width:18px;height:18px;background:radial-gradient(circle at 0% 100%, transparent 17.85px, #000 18.15px)"></div><div style="position:absolute;left:4px;top:1126px;width:18px;height:18px;background:radial-gradient(circle at 100% 0%, transparent 17.85px, #000 18.15px)"></div><div style="position:absolute;left:1684px;top:1126px;width:18px;height:18px;background:radial-gradient(circle at 0% 0%, transparent 17.85px, #000 18.15px)"></div><div style="position:absolute;left:2px;top:572px;width:226px;height:56px;border:6px solid #4a9ff5;box-sizing:border-box"></div></div>
</body></html>
